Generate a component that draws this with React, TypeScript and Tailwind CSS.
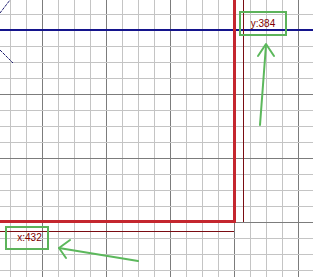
const W = 313;
const H = 277;

// grid lines every 16px, darker every 64px
const vLines = Array.from({ length: 19 }, (_, i) => 10 + i * 16);
const hLines = Array.from({ length: 17 }, (_, i) => 14 + i * 16);

function Canvas() {
  return (
    <svg
      className="absolute inset-0"
      width={W}
      height={H}
      viewBox={`0 0 ${W} ${H}`}
      shapeRendering="crispEdges"
    >
      {vLines.map((x) => (
        <line
          key={'v' + x}
          x1={x + 0.5}
          y1={0}
          x2={x + 0.5}
          y2={H}
          stroke={(x - 42) % 64 === 0 ? '#7c7c7c' : '#c4c4c4'}
        />
      ))}
      {hLines.map((y) => (
        <line
          key={'h' + y}
          x1={0}
          y1={y + 0.5}
          x2={W}
          y2={y + 0.5}
          stroke={(y - 30) % 64 === 0 ? '#7c7c7c' : '#c4c4c4'}
        />
      ))}

      {/* corner marker, mostly off-screen */}
      <g shapeRendering="auto" stroke="#1b1b6e" strokeWidth={1} strokeDasharray="3 1">
        <line x1={0} y1={13} x2={10} y2={0} />
        <line x1={0} y1={50} x2={13} y2={63} />
      </g>

      {/* blue guide */}
      <rect x={0} y={29} width={W} height={2} fill="#14148c" />

      {/* red bounds */}
      <rect x={233} y={0} width={3} height={223} fill="#c4262e" />
      <rect x={0} y={220} width={236} height={3} fill="#c4262e" />
      <line x1={243.5} y1={0} x2={243.5} y2={222} stroke="#7a0c12" />
      <line x1={0} y1={231.5} x2={234} y2={231.5} stroke="#7a0c12" />

      {/* arrows */}
      <g
        shapeRendering="auto"
        stroke="#5cb85c"
        strokeWidth={2}
        fill="none"
        strokeLinecap="round"
        strokeLinejoin="round"
      >
        <line x1={260} y1={125} x2={266} y2={45} />
        <polyline points="258,56 266,44 274,56" />
        <line x1={138} y1={261} x2={59} y2={248} />
        <polyline points="70,240 59,248 66,258" />
      </g>
    </svg>
  );
}

export default function App() {
  return (
    <div className="relative w-[313px] h-[277px] overflow-hidden bg-white font-['Liberation_Sans',Arial,sans-serif]">
      <Canvas />
      <div className="absolute left-[239px] top-[11px] w-[48px] h-[25px] border-2 border-[#5cb35a] flex items-center justify-center text-[10px] leading-none text-[#800000]">
        y:384
      </div>
      <div className="absolute left-[5px] top-[226px] w-[44px] h-[24px] border-2 border-[#5cb35a] flex items-center justify-center pl-[5px] text-[10px] leading-none text-[#800000]">
        x:432
      </div>
    </div>
  );
}
